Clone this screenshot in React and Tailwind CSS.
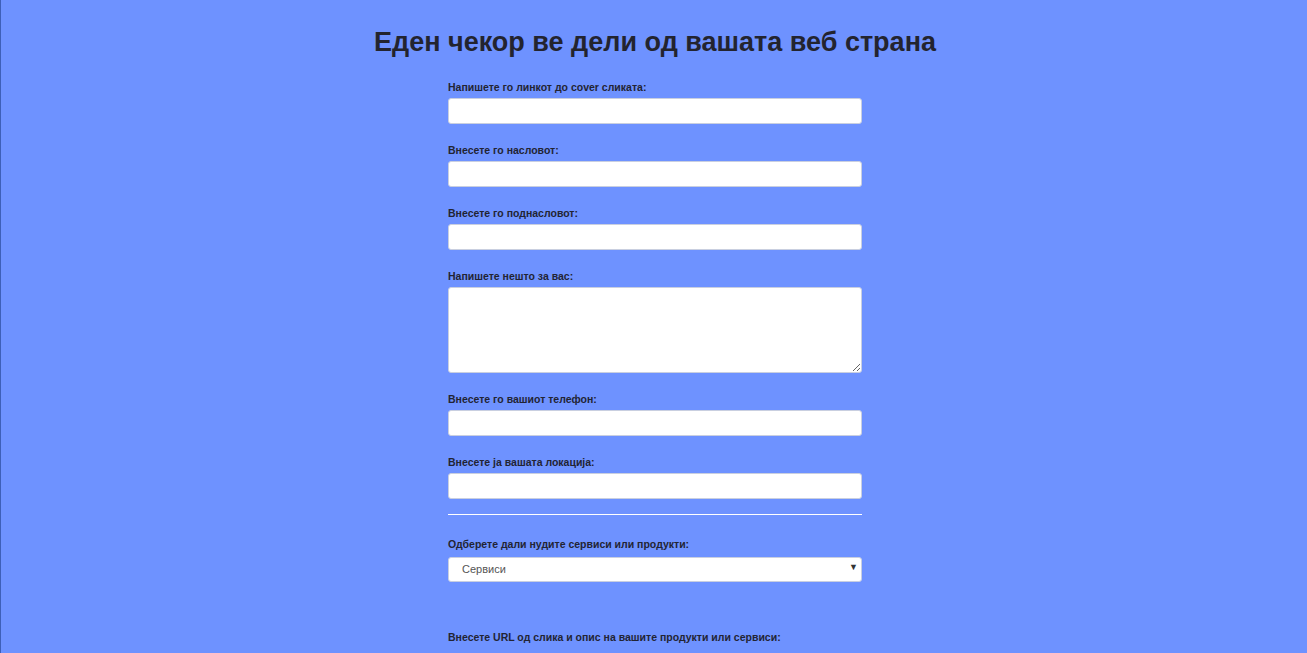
import React from "react";

const fields = [
  { label: "Напишете го линкот до cover сликата:", type: "input" },
  { label: "Внесете го насловот:", type: "input" },
  { label: "Внесете го поднасловот:", type: "input" },
  { label: "Напишете нешто за вас:", type: "textarea" },
  { label: "Внесете го вашиот телефон:", type: "input" },
  { label: "Внесете ја вашата локација:", type: "input" },
];

export default function App() {
  return (
    <div
      className="min-h-[653px] bg-[#6e92ff] border-l border-[#3e5fb8] text-[#222433]"
      style={{ fontFamily: '"Liberation Sans", Arial, sans-serif' }}
    >
      <div className="flex justify-center pl-[2px]">
        <div className="flex flex-col items-center">
          <h1 className="mt-[25px] text-[27px] leading-[34px] font-bold text-[#23242f] whitespace-nowrap">
            Еден чекор ве дели од вашата веб страна
          </h1>

          <form className="w-[414px] mt-[22px] flex flex-col">
            {fields.map((f) => (
              <div key={f.label} className="flex flex-col mb-[20px]">
                <label className="text-[10.5px] leading-[13px] font-bold mb-[4px]">
                  {f.label}
                </label>
                {f.type === "input" ? (
                  <input
                    type="text"
                    className="h-[26px] bg-white rounded-[3px] border border-[#c9cfe0] px-2 text-[12px] outline-none"
                  />
                ) : (
                  <textarea className="h-[86px] bg-white rounded-[3px] border border-[#c9cfe0] px-2 text-[12px] outline-none block" />
                )}
              </div>
            ))}

            <hr className="border-0 border-t border-white -mt-[5px] mb-[23px]" />

            <div className="flex flex-col">
              <label className="text-[10.5px] leading-[13px] font-bold mb-[5px]">
                Одберете дали нудите сервиси или продукти:
              </label>
              <div className="relative">
                <select className="appearance-none w-full h-[25px] bg-white rounded-[3px] border border-[#c9cfe0] pl-[13px] text-[11px] text-[#555555] outline-none">
                  <option>Сервиси</option>
                  <option>Продукти</option>
                </select>
                <span className="absolute right-[4px] top-[5px] text-[9px] text-[#333] pointer-events-none">
                  ▼
                </span>
              </div>
            </div>

            <label className="mt-[49px] text-[10.5px] leading-[13px] font-bold">
              Внесете URL од слика и опис на вашите продукти или сервиси:
            </label>
          </form>
        </div>
      </div>
    </div>
  );
}
